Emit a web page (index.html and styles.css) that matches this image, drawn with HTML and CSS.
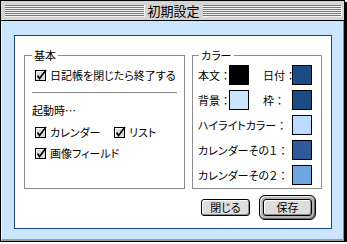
FILE: index.html
```html
<!doctype html>
<html lang="ja">
  <head>
    <meta charset="UTF-8" />
    <meta name="viewport" content="width=device-width, initial-scale=1.0" />
    <title>初期設定</title>
    <link rel="stylesheet" href="styles.css">
  </head>
  <body>
    <main class="window">
        <div class="titlebar">
            <span class="stripes"></span>
            <span class="title">初期設定</span>
            <span class="stripes"></span>
        </div>
        <div class="content">
            <div class="panel">
                <div class="groups">
                    <section class="group group-basic">
                        <span class="group-title">基本</span>
                        <label class="check first-check">
                            <svg class="box" width="13" height="13" viewBox="0 0 13 13"><rect x="0.5" y="1.5" width="10" height="10" fill="#dcdcdc" stroke="#000"/><path d="M1.5 10.5V2.5H9.5" stroke="#fff" fill="none"/><path d="M2.5 6.5L4.5 9.5L11 1" stroke="#000" stroke-width="1.6" fill="none"/></svg>
                            日記帳を閉じたら終了する
                        </label>
                        <hr class="separator">
                        <div class="subhead">起動時…</div>
                        <div class="check-row">
                            <label class="check wide">
                                <svg class="box" width="13" height="13" viewBox="0 0 13 13"><rect x="0.5" y="1.5" width="10" height="10" fill="#dcdcdc" stroke="#000"/><path d="M1.5 10.5V2.5H9.5" stroke="#fff" fill="none"/><path d="M2.5 6.5L4.5 9.5L11 1" stroke="#000" stroke-width="1.6" fill="none"/></svg>
                                カレンダー
                            </label>
                            <label class="check">
                                <svg class="box" width="13" height="13" viewBox="0 0 13 13"><rect x="0.5" y="1.5" width="10" height="10" fill="#dcdcdc" stroke="#000"/><path d="M1.5 10.5V2.5H9.5" stroke="#fff" fill="none"/><path d="M2.5 6.5L4.5 9.5L11 1" stroke="#000" stroke-width="1.6" fill="none"/></svg>
                                リスト
                            </label>
                        </div>
                        <label class="check last-check">
                            <svg class="box" width="13" height="13" viewBox="0 0 13 13"><rect x="0.5" y="1.5" width="10" height="10" fill="#dcdcdc" stroke="#000"/><path d="M1.5 10.5V2.5H9.5" stroke="#fff" fill="none"/><path d="M2.5 6.5L4.5 9.5L11 1" stroke="#000" stroke-width="1.6" fill="none"/></svg>
                            画像フィールド
                        </label>
                    </section>
                    <section class="group group-color">
                        <span class="group-title">カラー</span>
                        <div class="color-row">
                            <div class="pair"><span class="label l-31">本文<span class="colon">：</span></span><span class="swatch" style="background:#000"></span></div>
                            <div class="pair"><span class="label l-29">日付<span class="colon">：</span></span><span class="swatch" style="background:#1c4c86"></span></div>
                        </div>
                        <div class="color-row">
                            <div class="pair"><span class="label l-31">背景<span class="colon">：</span></span><span class="swatch" style="background:#cce5ff"></span></div>
                            <div class="pair"><span class="label l-29">枠<span class="colon">：</span></span><span class="swatch" style="background:#1c4c86"></span></div>
                        </div>
                        <div class="color-row">
                            <span class="label">ハイライトカラー<span class="colon">：</span></span><span class="swatch" style="background:#bcdcff"></span>
                        </div>
                        <div class="color-row">
                            <span class="label">カレンダーその１<span class="colon">：</span></span><span class="swatch" style="background:#2e5a9c"></span>
                        </div>
                        <div class="color-row">
                            <span class="label">カレンダーその２<span class="colon">：</span></span><span class="swatch" style="background:#70a6e0"></span>
                        </div>
                    </section>
                </div>
                <div class="buttons">
                    <button type="button" class="btn">閉じる</button>
                    <span class="default-ring"><button type="button" class="btn">保存</button></span>
                </div>
            </div>
        </div>
    </main>
  </body>
</html>
```

FILE: styles.css
```css
:root {
    font-family: "Noto Sans CJK JP", "DejaVu Sans", sans-serif;
    font-size: 11px;
    font-feature-settings: "palt";
    color: #000;
}

* {
    box-sizing: border-box;
    margin: 0;
    padding: 0;
}

body {
    background: #fff;
}

.window {
    width: 345px;
    height: 242px;
    border: 1px solid #000;
    box-shadow: 2px 2px 0 #000;
    display: flex;
    flex-direction: column;
}

.titlebar {
    height: 20px;
    border-bottom: 1px solid #000;
    background: #d4d4d4;
    display: flex;
    align-items: center;
    padding: 0 2px 0 4px;
}

.stripes {
    flex: 1;
    height: 12px;
    background: repeating-linear-gradient(#777 0 1px, #f4f4f4 1px 2px);
    border-right: 1px solid #f4f4f4;
}

.title {
    padding: 0 3px;
    font-size: 13px;
    line-height: 16px;
    font-feature-settings: normal;
}

.content {
    flex: 1;
    background: #cce5ff;
    border-left: 1px solid #eef6ff;
    border-right: 1px solid #8a8a8a;
    border-bottom: 2px solid #9a9a9a;
    padding: 14px 11px 10px 12px;
}

.panel {
    height: 100%;
    background: #fff;
    border: 1px solid #1c4c86;
    padding: 19px 9px 8px 9px;
}

.groups {
    display: flex;
    gap: 7px;
}

.group {
    position: relative;
    height: 134px;
    border: 1px solid #8c8c8c;
}

.group-title {
    position: absolute;
    top: -9px;
    background: #fff;
    padding: 0 2px;
    line-height: 16px;
}

.group-basic {
    width: 161px;
    padding: 11px 7px 0 7px;
}

.group-basic .group-title {
    left: 7px;
}

.group-color {
    width: 130px;
    padding: 9px 9px 0 5px;
}

.group-color .group-title {
    left: 6px;
}

.check {
    display: flex;
    align-items: center;
    height: 16px;
    line-height: 16px;
    white-space: nowrap;
}

.check .box {
    margin: 0 2px 0 3px;
    flex: none;
}

.separator {
    border: none;
    border-top: 1px solid #8c8c8c;
    margin: 9px 0;
}

.subhead {
    height: 16px;
    line-height: 16px;
}

.check-row {
    display: flex;
    margin-top: 6px;
}

.check.wide {
    width: 79px;
}

.last-check {
    margin-top: 5px;
}

.color-row {
    display: flex;
    align-items: center;
    justify-content: space-between;
    height: 20px;
    margin-bottom: 5px;
}

.pair {
    display: flex;
    align-items: center;
}

.label {
    line-height: 16px;
    white-space: nowrap;
}

.colon {
    font-feature-settings: normal;
}

.l-31 {
    width: 31px;
}

.l-29 {
    width: 29px;
}

.swatch {
    width: 20px;
    height: 20px;
    border: 1px solid #000;
    flex: none;
}

.buttons {
    display: flex;
    justify-content: flex-end;
    align-items: center;
    gap: 9px;
    margin-top: 6px;
    padding-right: 6px;
}

.btn {
    width: 49px;
    height: 17px;
    font: inherit;
    line-height: 15px;
    border: 1px solid #000;
    border-radius: 3px;
    background: #dedede;
    box-shadow: inset 1px 1px 0 #fff, inset -1px -1px 0 #8c8c8c;
    color: #000;
}

.default-ring {
    display: flex;
    padding: 3px;
    border: 1px solid #000;
    border-radius: 6px;
    background: #b4b4b4;
    box-shadow: inset 1px 1px 0 #eee, inset -1px -1px 0 #6a6a6a;
}
```
